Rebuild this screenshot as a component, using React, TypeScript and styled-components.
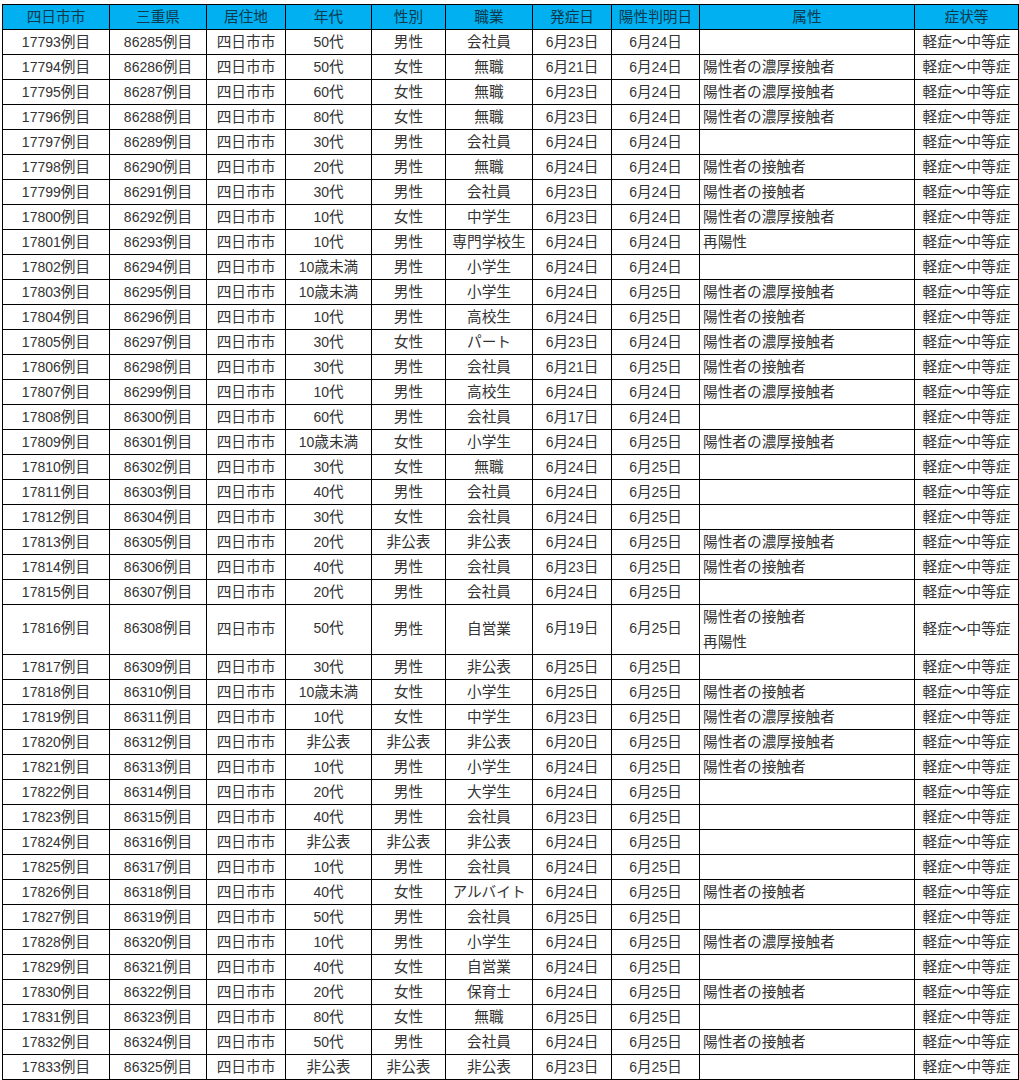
import React from 'react'
import styled, { createGlobalStyle } from 'styled-components'

const GlobalStyle = createGlobalStyle`
  html, body {
    margin: 0;
    padding: 0;
    background: #fff;
  }
`

const Page = styled.div`
  padding: 4px 0 0 2px;
  width: 1019px;
  box-sizing: border-box;
`

const Sheet = styled.table`
  border-collapse: collapse;
  table-layout: fixed;
  width: 1016px;
  font-family: 'Noto Sans CJK JP', 'Liberation Sans', sans-serif;
  font-size: 14.67px;
  color: #333;
`

const HeadCell = styled.th`
  background: #00b0f0;
  border: 1px solid #000;
  padding: 0 0 2px;
  font-weight: 400;
  line-height: 18px;
  text-align: center;
  color: #0c3a4e;
`

const Row = styled.tr`
  height: 25px;
`

const Cell = styled.td<{ $left?: boolean; $lift?: number }>`
  border: 1px solid #000;
  padding: 0 0 ${({ $lift = 2 }) => $lift}px ${({ $left }) => ($left ? '3px' : '0')};
  text-align: ${({ $left }) => ($left ? 'left' : 'center')};
  white-space: nowrap;
  line-height: 18px;
`

const AttrLine = styled.div<{ $double?: boolean }>`
  line-height: ${({ $double }) => ($double ? '24.5px' : '18px')};

  ${({ $double }) =>
    $double &&
    `
    &:first-child { margin-top: -1px; }
    &:last-child { margin-bottom: 1px; }
  `}
`

// Latin digits run a little narrower than the kana next to them
const Digits = styled.span`
  font-family: 'Liberation Sans', sans-serif;
  font-size: 14px;
  font-kerning: none;
`

const Label = ({ text }: { text: string }) => (
  <>
    {text.split(/(\d+)/).map((part, i) => (i % 2 ? <Digits key={i}>{part}</Digits> : part))}
  </>
)

const COLS = [107, 97, 79, 86, 74, 87, 79, 88, 215, 104]
const HEADS = ['四日市市', '三重県', '居住地', '年代', '性別', '職業', '発症日', '陽性判明日', '属性', '症状等']

const DENSE = '陽性者の濃厚接触者'
const TOUCH = '陽性者の接触者'
const AGAIN = '再陽性'

// age, sex, job, onset, positive, attribute
const DATA: [string, string, string, string, string, string][] = [
  ['50代', '男性', '会社員', '6月23日', '6月24日', ''],
  ['50代', '女性', '無職', '6月21日', '6月24日', DENSE],
  ['60代', '女性', '無職', '6月23日', '6月24日', DENSE],
  ['80代', '女性', '無職', '6月23日', '6月24日', DENSE],
  ['30代', '男性', '会社員', '6月24日', '6月24日', ''],
  ['20代', '男性', '無職', '6月24日', '6月24日', TOUCH],
  ['30代', '男性', '会社員', '6月23日', '6月24日', TOUCH],
  ['10代', '女性', '中学生', '6月23日', '6月24日', DENSE],
  ['10代', '男性', '専門学校生', '6月24日', '6月24日', AGAIN],
  ['10歳未満', '男性', '小学生', '6月24日', '6月24日', ''],
  ['10歳未満', '男性', '小学生', '6月24日', '6月25日', DENSE],
  ['10代', '男性', '高校生', '6月24日', '6月25日', TOUCH],
  ['30代', '女性', 'パート', '6月23日', '6月24日', DENSE],
  ['30代', '男性', '会社員', '6月21日', '6月25日', TOUCH],
  ['10代', '男性', '高校生', '6月24日', '6月24日', DENSE],
  ['60代', '男性', '会社員', '6月17日', '6月24日', ''],
  ['10歳未満', '女性', '小学生', '6月24日', '6月25日', DENSE],
  ['30代', '女性', '無職', '6月24日', '6月25日', ''],
  ['40代', '男性', '会社員', '6月24日', '6月25日', ''],
  ['30代', '女性', '会社員', '6月24日', '6月25日', ''],
  ['20代', '非公表', '非公表', '6月24日', '6月25日', DENSE],
  ['40代', '男性', '会社員', '6月23日', '6月25日', TOUCH],
  ['20代', '男性', '会社員', '6月24日', '6月25日', ''],
  ['50代', '男性', '自営業', '6月19日', '6月25日', `${TOUCH}\n${AGAIN}`],
  ['30代', '男性', '非公表', '6月25日', '6月25日', ''],
  ['10歳未満', '女性', '小学生', '6月25日', '6月25日', TOUCH],
  ['10代', '女性', '中学生', '6月23日', '6月25日', DENSE],
  ['非公表', '非公表', '非公表', '6月20日', '6月25日', DENSE],
  ['10代', '男性', '小学生', '6月24日', '6月25日', TOUCH],
  ['20代', '男性', '大学生', '6月24日', '6月25日', ''],
  ['40代', '男性', '会社員', '6月23日', '6月25日', ''],
  ['非公表', '非公表', '非公表', '6月24日', '6月25日', ''],
  ['10代', '男性', '会社員', '6月24日', '6月25日', ''],
  ['40代', '女性', 'アルバイト', '6月24日', '6月25日', TOUCH],
  ['50代', '男性', '会社員', '6月25日', '6月25日', ''],
  ['10代', '男性', '小学生', '6月24日', '6月25日', DENSE],
  ['40代', '女性', '自営業', '6月24日', '6月25日', ''],
  ['20代', '女性', '保育士', '6月24日', '6月25日', TOUCH],
  ['80代', '女性', '無職', '6月25日', '6月25日', ''],
  ['50代', '男性', '会社員', '6月24日', '6月25日', TOUCH],
  ['非公表', '非公表', '非公表', '6月23日', '6月25日', ''],
]

export default function App() {
  return (
    <Page>
      <GlobalStyle />
      <Sheet>
        <colgroup>
          {COLS.map((w, i) => (
            <col key={i} width={w} />
          ))}
        </colgroup>
        <thead>
          <Row>
            {HEADS.map((h) => (
              <HeadCell key={h}>{h}</HeadCell>
            ))}
          </Row>
        </thead>
        <tbody>
          {DATA.map(([age, sex, job, onset, positive, attr], i) => {
            const lines = attr.split('\n')
            const tall = lines.length > 1
            // the two-line row sits a touch higher in the sheet
            const lift = tall ? 4 : 2
            return (
              <Row key={i}>
                <Cell $lift={lift}><Label text={`${17793 + i}例目`} /></Cell>
                <Cell $lift={lift}><Label text={`${86285 + i}例目`} /></Cell>
                <Cell $lift={lift}>四日市市</Cell>
                <Cell $lift={lift}><Label text={age} /></Cell>
                <Cell $lift={lift}>{sex}</Cell>
                <Cell $lift={lift}>{job}</Cell>
                <Cell $lift={lift}><Label text={onset} /></Cell>
                <Cell $lift={lift}><Label text={positive} /></Cell>
                <Cell $left $lift={tall ? 0 : 2}>
                  {lines.map((l) => (
                    <AttrLine key={l} $double={tall}>{l}</AttrLine>
                  ))}
                </Cell>
                <Cell $lift={lift}>軽症～中等症</Cell>
              </Row>
            )
          })}
        </tbody>
      </Sheet>
    </Page>
  )
}
